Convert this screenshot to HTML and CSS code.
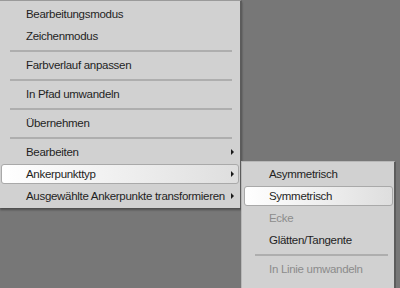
FILE: index.html
```html
<!DOCTYPE html>
<html lang="de">
<head>
    <meta charset="UTF-8">
    <title>Ankerpunkt Kontextmenü</title>
    <link rel="stylesheet" href="styles.css">
</head>
<body>
    <div class="desk">
        <ul class="menu main-menu">
            <li class="item"><span>Bearbeitungsmodus</span></li>
            <li class="item"><span>Zeichenmodus</span></li>
            <li class="sep"></li>
            <li class="item"><span>Farbverlauf anpassen</span></li>
            <li class="sep"></li>
            <li class="item"><span>In Pfad umwandeln</span></li>
            <li class="sep"></li>
            <li class="item"><span>Übernehmen</span></li>
            <li class="sep"></li>
            <li class="item has-sub"><span>Bearbeiten</span></li>
            <li class="item has-sub active"><span>Ankerpunkttyp</span></li>
            <li class="item has-sub"><span>Ausgewählte Ankerpunkte transformieren</span></li>
        </ul>

        <ul class="menu sub-menu">
            <li class="item"><span>Asymmetrisch</span></li>
            <li class="item active"><span>Symmetrisch</span></li>
            <li class="item disabled"><span>Ecke</span></li>
            <li class="item"><span>Glätten/Tangente</span></li>
            <li class="sep"></li>
            <li class="item disabled"><span>In Linie umwandeln</span></li>
        </ul>
    </div>
</body>
</html>
```

FILE: styles.css
```css
/* Kontextmenü, grau */
:root {
    --desk: #777777;
    --menu-bg: #d1d1d1;
    --text: #1f1f1f;
    --text-off: #8c8c8c;
    --line: #aeaeae;
}

body {
    margin: 0;
    padding: 0;
    background: var(--desk);
    font-family: "Liberation Sans", Arial, sans-serif;
    font-size: 11.5px;
    letter-spacing: -0.3px;
    color: var(--text);
}

.desk {
    position: relative;
    width: 400px;
    height: 288px;
    overflow: hidden;
}

.menu {
    list-style: none;
    margin: 0;
    background: var(--menu-bg);
}

.main-menu {
    width: 240px;
    padding: 2px 0 1px;
    border-top: 1px solid #9a9a9a;
    border-right: 2px solid #5c5c5c;
    box-shadow: 0 2px 2px rgba(0, 0, 0, 0.35);
}

.sub-menu {
    position: absolute;
    top: 161px;
    left: 241px;
    width: 152px;
    height: 140px;
    padding: 1px 0 0;
    border: 1px solid #b8b8b8;
    border-right: 2px solid #5c5c5c;
}

.item {
    position: relative;
    height: 22px;
    line-height: 22px;
    padding-left: 26px;
    white-space: nowrap;
}

.item span {
    position: relative;
    z-index: 1;
}

.sub-menu .item {
    padding-left: 27px;
}

.item.disabled {
    color: var(--text-off);
}

/* Hervorgehobene Zeile */
.item.active::before {
    content: "";
    position: absolute;
    top: 1px;
    bottom: 1px;
    left: 1px;
    right: 1px;
    border: 1px solid #a9a9a9;
    border-radius: 3px;
    background: linear-gradient(to right, #ffffff, #eeeeee 55%, #dedede);
}

.sub-menu .item.active::before {
    left: 2px;
    right: 1px;
}

/* Untermenü-Pfeil */
.item.has-sub::after {
    content: "";
    position: absolute;
    right: 6px;
    top: 8px;
    border-left: 3px solid #1a1a1a;
    border-top: 3px solid transparent;
    border-bottom: 3px solid transparent;
}

.sep {
    height: 7px;
    position: relative;
}

.sep::before {
    content: "";
    position: absolute;
    left: 10px;
    right: 8px;
    top: 3px;
    height: 2px;
    background: var(--line);
}

.sub-menu .sep::before {
    left: 13px;
    right: 6px;
}
```
